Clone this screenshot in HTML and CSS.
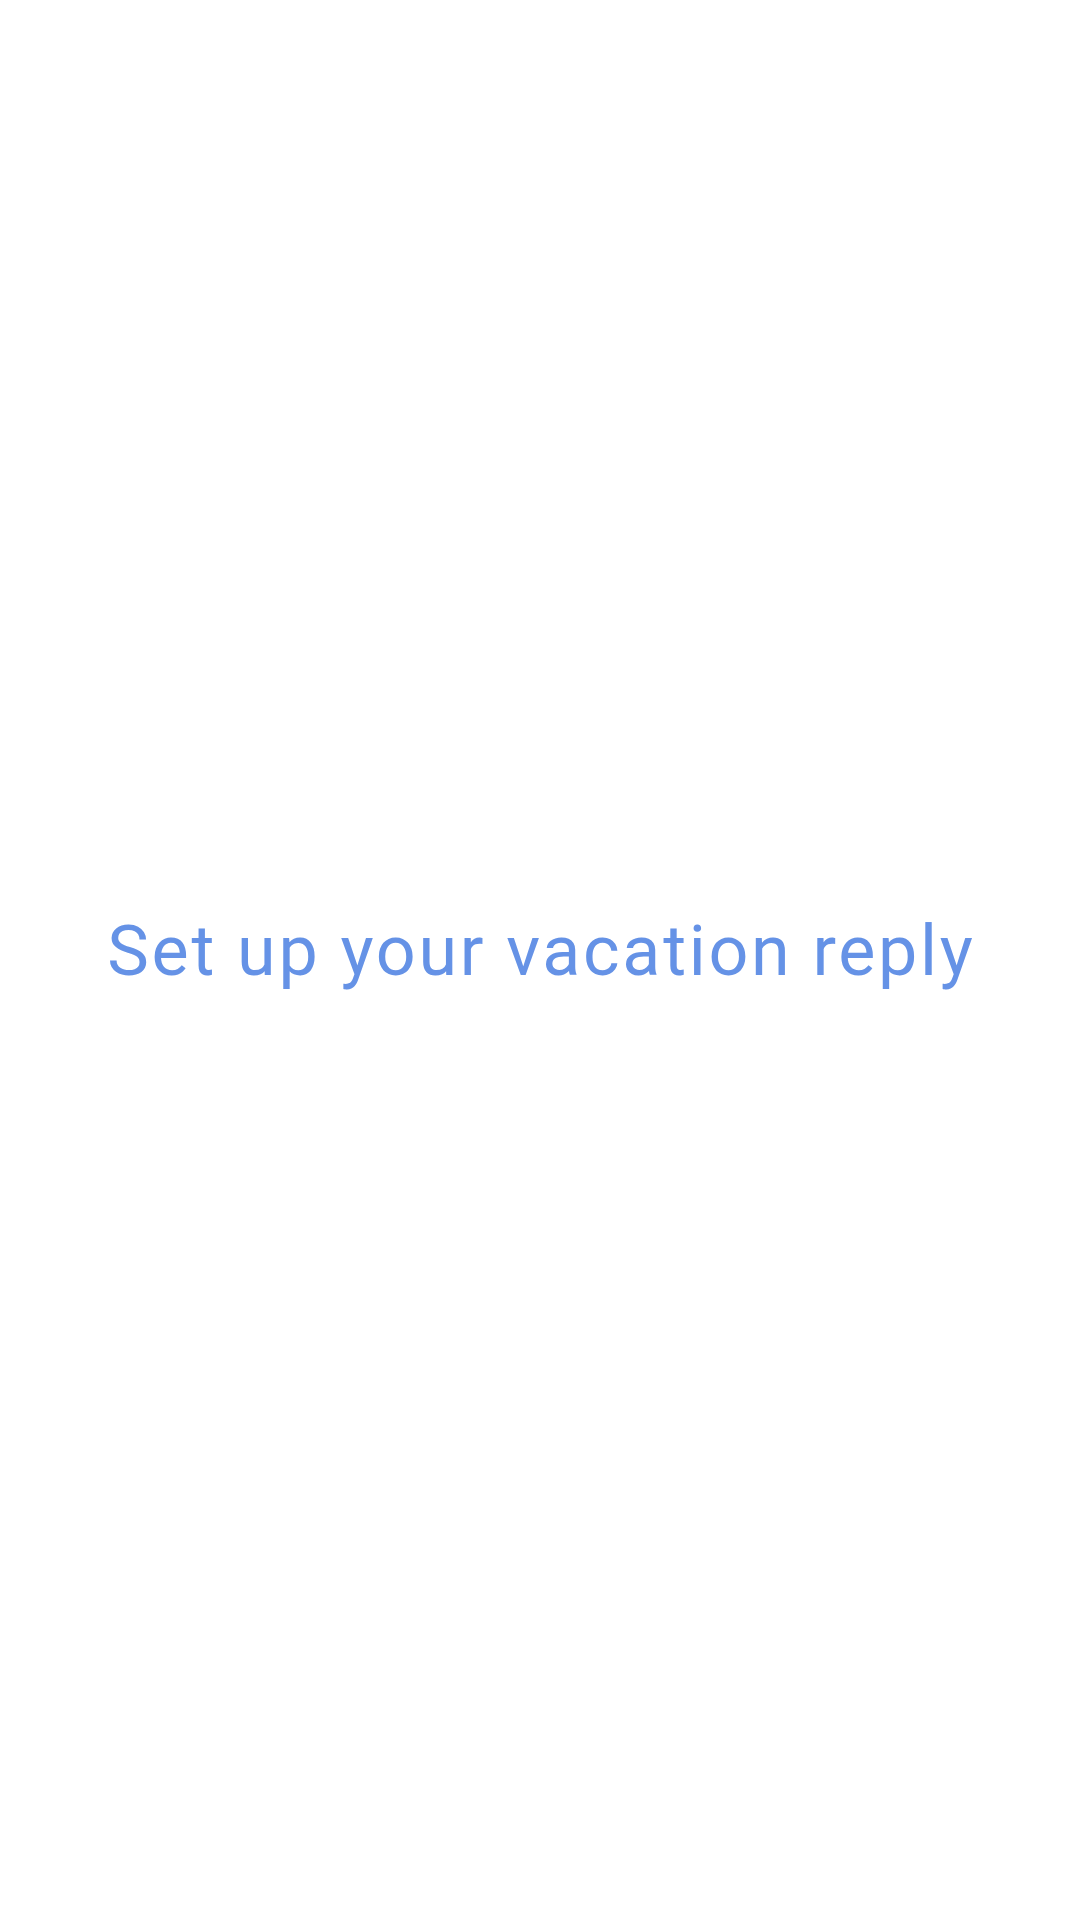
FILE: index.html
```html
<!DOCTYPE html>
<html>
<head>
<meta charset="utf-8">
<link rel="stylesheet" href="styles.css">
</head>
<body>
<main class="screen">
  <h1 class="title">Set up your vacation reply</h1>
</main>
</body>
</html>
```
FILE: styles.css
```css
html, body {
  margin: 0;
  padding: 0;
  background: #ffffff;
}
.screen {
  width: 1080px;
  height: 1920px;
  display: flex;
  align-items: flex-start;
  justify-content: center;
  padding-top: 906px;
  box-sizing: border-box;
}
.title {
  margin: 0;
  padding-left: 3px;
  font-family: Roboto, "Noto Sans", sans-serif;
  font-weight: 400;
  font-size: 70px;
  line-height: 90px;
  letter-spacing: 2.7px;
  color: #6592e6;
  white-space: nowrap;
}
```
